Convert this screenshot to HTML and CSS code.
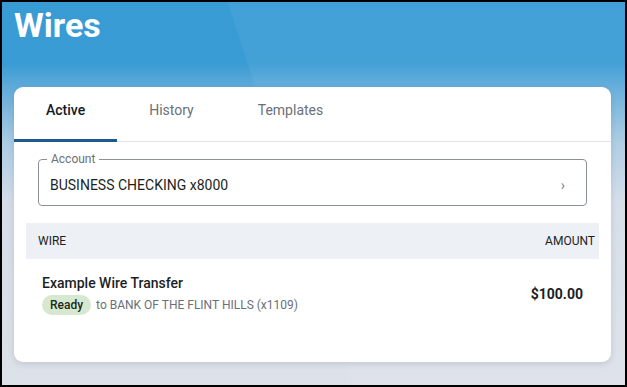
FILE: index.html
```html
<!DOCTYPE html>
<html>
<head>
  <meta name="viewport" content="width=device-width, initial-scale=1.0">
  <link rel="stylesheet" href="styles.css">
</head>
<body>
  <div class="window">
    <h1 class="title">Wires</h1>

    <div class="card">
      <div class="tabs">
        <button type="button" class="tab active">Active</button>
        <button type="button" class="tab">History</button>
        <button type="button" class="tab">Templates</button>
      </div>

      <fieldset class="field">
        <legend>Account</legend>
        <div class="field-value">
          <span>BUSINESS CHECKING x8000</span>
          <span class="chevron">&rsaquo;</span>
        </div>
      </fieldset>

      <div class="table">
        <div class="table-head">
          <span>WIRE</span>
          <span>AMOUNT</span>
        </div>
        <div class="table-row">
          <div class="wire">
            <div class="wire-name">Example Wire Transfer</div>
            <div class="wire-meta">
              <span class="badge">Ready</span>
              <span>to BANK OF THE FLINT HILLS (x1109)</span>
            </div>
          </div>
          <div class="amount">$100.00</div>
        </div>
      </div>
    </div>
  </div>
</body>
</html>
```

FILE: styles.css
```css
html, body {
  margin: 0;
  padding: 0;
}

body {
  font-family: Roboto, "Liberation Sans", sans-serif;
  color: #1b1f24;
}

.window {
  box-sizing: border-box;
  width: 627px;
  height: 387px;
  border: 2px solid #000;
  padding: 0 14px 0 12px;
  background:
    linear-gradient(72deg, transparent 0, transparent 332px, rgba(255, 255, 255, 0.05) 334px, rgba(255, 255, 255, 0.05) 100%),
    linear-gradient(180deg, #389bd4 0, #3a9cd4 62px, #6aafdb 92px, #aacbe3 140px, #d4dde8 200px, #dde1e8 100%);
}

.title {
  margin: 0;
  padding: 3px 0 0 0;
  height: 85px;
  box-sizing: border-box;
  font-size: 34px;
  font-weight: 700;
  color: #fff;
}

.card {
  background: #fff;
  border-radius: 9px;
  height: 275px;
  box-shadow: 0 2px 6px rgba(40, 60, 90, 0.15);
  overflow: hidden;
}

.tabs {
  display: flex;
  height: 54px;
  border-bottom: 1px solid #e2e4e8;
}

.tab {
  font-family: inherit;
  font-size: 14px;
  color: #6b7078;
  background: none;
  border: none;
  padding: 0 32px 7px;
  border-bottom: 3px solid transparent;
  margin-bottom: -1px;
  cursor: pointer;
}

.tab.active {
  color: #15191e;
  font-weight: 500;
  border-bottom-color: #1f5a8e;
}

.field {
  margin: 10px 24px 0;
  padding: 0 21px 0 8px;
  border: 1px solid #8c9199;
  border-radius: 4px;
  height: 54px;
  box-sizing: border-box;
}

.field legend {
  font-size: 12px;
  color: #6b7078;
  padding: 0 4px;
  line-height: 14px;
}

.field-value {
  display: flex;
  justify-content: space-between;
  align-items: center;
  height: 38px;
  font-size: 14px;
  padding-left: 3px;
}

.chevron {
  color: #7a7f86;
  font-size: 14px;
}

.table {
  margin: 17px 12px 0;
}

.table-head {
  display: flex;
  justify-content: space-between;
  align-items: center;
  height: 36px;
  padding: 0 4px 0 12px;
  background: #edf0f4;
  font-size: 12px;
  color: #1b1f24;
}

.table-row {
  display: flex;
  justify-content: space-between;
  align-items: center;
  padding: 16px 16px;
}

.wire-name {
  font-size: 14px;
  font-weight: 500;
  margin-bottom: 4px;
}

.wire-meta {
  display: flex;
  align-items: center;
  gap: 5px;
  font-size: 12px;
  color: #6b7078;
}

.badge {
  background: #d7e8d0;
  color: #1b2a1b;
  font-weight: 500;
  border-radius: 10px;
  padding: 3px 8px;
}

.amount {
  font-size: 14px;
  font-weight: 700;
  margin-bottom: 3px;
}
```
